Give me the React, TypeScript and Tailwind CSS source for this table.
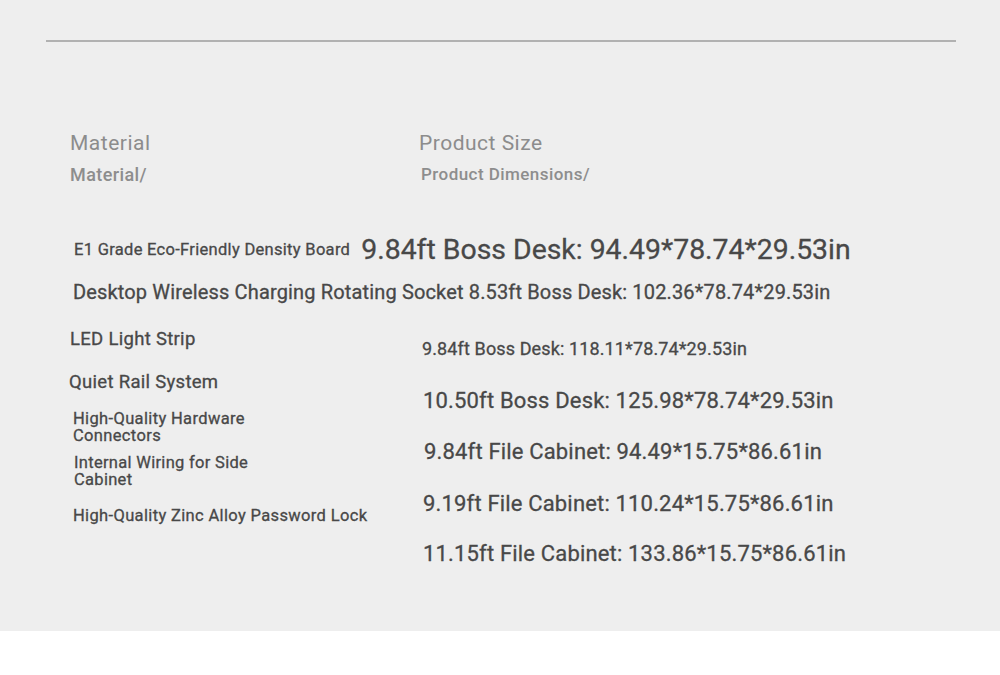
export default function App() {
  return (
    <div className="w-[1000px] min-h-[675px] bg-white font-['Roboto',sans-serif] text-[#484848]">
      <div className="h-[631px] bg-[#eeeeee] pt-[40px]">
        <div className="ml-[46px] w-[910px] h-[2px] bg-[#b1b1b1]" />

        {/* headers */}
        <div className="mt-[89px] flex">
          <div className="w-[419px] pl-[70px]">
            <div className="text-[21px] leading-[24px] tracking-[0.5px] text-[#8c8c8c]">Material</div>
            <div className="mt-[9px] text-[18px] leading-[22px] font-medium tracking-[0.4px] text-[#8d8d8d]">Material/</div>
          </div>
          <div>
            <div className="text-[21px] leading-[24px] tracking-[0.5px] text-[#8c8c8c]">Product Size</div>
            <div className="mt-[8px] ml-[2px] text-[17px] leading-[22px] font-medium tracking-[0.45px] text-[#8d8d8d]">Product Dimensions/</div>
          </div>
        </div>

        <div className="[-webkit-text-stroke:0.3px_#484848]">
          <div className="mt-[46px] flex h-[36px] items-center pl-[74px]">
            <span className="text-[16.5px] tracking-[0.3px]">E1 Grade Eco-Friendly Density Board</span>
            <span className="ml-[11px] text-[28.4px]">9.84ft Boss Desk: 94.49*78.74*29.53in</span>
          </div>
          <div className="mt-[12px] pl-[73px] text-[20px] leading-[24px] tracking-[0.15px]">
            Desktop Wireless Charging Rotating Socket 8.53ft Boss Desk: 102.36*78.74*29.53in
          </div>

          <div className="mt-[23px] flex">
            <div className="flex w-[422px] flex-col pl-[69px]">
              <div className="ml-[1px] text-[18.5px] leading-[24px] tracking-[0.3px]">LED Light Strip</div>
              <div className="mt-[19px] text-[18.5px] leading-[24px] tracking-[0.3px]">Quiet Rail System</div>
              <div className="mt-[16px] ml-[4px] text-[16.5px] leading-[17px] tracking-[0.35px]">
                High-Quality Hardware
                <br />
                Connectors
              </div>
              <div className="mt-[10px] ml-[5px] text-[16.5px] leading-[17px] tracking-[0.3px]">
                Internal Wiring for Side
                <br />
                Cabinet
              </div>
              <div className="mt-[18px] ml-[4px] text-[16.5px] leading-[20px] tracking-[0.35px]">High-Quality Zinc Alloy Password Lock</div>
            </div>
            <div className="flex flex-col">
              <div className="mt-[10px] text-[18px] leading-[24px] tracking-[0.12px]">9.84ft Boss Desk: 118.11*78.74*29.53in</div>
              <div className="mt-[26px] ml-[1px] text-[22px] leading-[28px] tracking-[0.17px]">10.50ft Boss Desk: 125.98*78.74*29.53in</div>
              <div className="mt-[23px] ml-[2px] text-[22px] leading-[28px] tracking-[0.17px]">9.84ft File Cabinet: 94.49*15.75*86.61in</div>
              <div className="mt-[24px] ml-[1px] text-[22px] leading-[28px] tracking-[0.17px]">9.19ft File Cabinet: 110.24*15.75*86.61in</div>
              <div className="mt-[22px] ml-[1px] text-[22px] leading-[28px] tracking-[0.17px]">11.15ft File Cabinet: 133.86*15.75*86.61in</div>
            </div>
          </div>
        </div>
      </div>
    </div>
  );
}
